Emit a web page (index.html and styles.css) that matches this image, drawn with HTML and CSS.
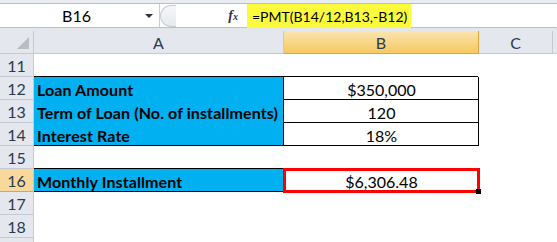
FILE: index.html
```html
<!DOCTYPE html>
<html lang="en">
<head>
    <meta charset="UTF-8">
    <title>PMT - Monthly Installment</title>
    <link rel="stylesheet" href="styles.css">
</head>
<body>
    <!-- Formula bar -->
    <div class="topband"></div>
    <div class="fbar">
        <div class="namebox">
            <span class="name">B16</span>
            <span class="arrow"></span>
        </div>
        <div class="splitter"><span class="knob"></span></div>
        <div class="fx">f<span>x</span></div>
        <div class="formula"><span class="hl">=PMT(B14/12,B13,-B12)</span></div>
    </div>
    <div class="gap"></div>

    <!-- Sheet -->
    <div class="sheet">
        <div class="hd corner"><span class="tri"></span></div>
        <div class="hd col">A</div>
        <div class="hd col active">B</div>
        <div class="hd col">C</div>
        <div class="hd col last"></div>

        <div class="hd row">11</div>
        <div class="c"></div><div class="c"></div><div class="c"></div><div class="c"></div>

        <div class="hd row">12</div>
        <div class="c blue top">Loan Amount</div>
        <div class="c box">$350,000</div>
        <div class="c"></div><div class="c"></div>

        <div class="hd row">13</div>
        <div class="c blue">Term of Loan (No. of installments)</div>
        <div class="c box">120</div>
        <div class="c"></div><div class="c"></div>

        <div class="hd row">14</div>
        <div class="c blue bottom">Interest Rate</div>
        <div class="c box">18%</div>
        <div class="c"></div><div class="c"></div>

        <div class="hd row">15</div>
        <div class="c"></div><div class="c"></div><div class="c"></div><div class="c"></div>

        <div class="hd row active">16</div>
        <div class="c blue top bottom">Monthly Installment</div>
        <div class="c result">$6,306.48<span class="handle"></span></div>
        <div class="c"></div><div class="c"></div>

        <div class="hd row">17</div>
        <div class="c"></div><div class="c"></div><div class="c"></div><div class="c"></div>

        <div class="hd row">18</div>
        <div class="c"></div><div class="c"></div><div class="c"></div><div class="c"></div>

        <div class="hd row"></div>
        <div class="c"></div><div class="c"></div><div class="c"></div><div class="c"></div>
    </div>
</body>
</html>
```

FILE: styles.css
```css
* {
    margin: 0;
    padding: 0;
    box-sizing: border-box;
}

body {
    width: 557px;
    height: 242px;
    overflow: hidden;
    background: #fff;
    font-family: Lato, "Liberation Sans", sans-serif;
    color: #000;
}

/* Formula bar */
.topband {
    height: 4px;
    background: #e9edf2;
    border-bottom: 1px solid #b9c0ca;
}

.fbar {
    height: 24px;
    display: flex;
    align-items: stretch;
    background: #fff;
    border-bottom: 1px solid #b9c0ca;
}

.namebox {
    width: 160px;
    display: flex;
    align-items: center;
    border-right: 1px solid #c9ced6;
}

.name {
    flex: 1;
    text-align: center;
    font-size: 16px;
    padding-left: 14px;
    padding-right: 6px;
}

.arrow {
    width: 0;
    height: 0;
    margin-right: 6px;
    border-left: 4px solid transparent;
    border-right: 4px solid transparent;
    border-top: 4px solid #333;
}

.splitter {
    width: 18px;
    background: #fff;
    display: flex;
    align-items: center;
}

.knob {
    width: 16px;
    height: 22px;
    border-radius: 11px 0 0 11px;
    border: 1px solid #c6ccd4;
    border-right: none;
    background: linear-gradient(#f6f7f9, #e6e9ed);
}

.fx {
    width: 69px;
    text-align: right;
    padding-right: 9px;
    font-family: "Liberation Serif", serif;
    font-style: italic;
    font-weight: bold;
    font-size: 14px;
    line-height: 24px;
    color: #333;
}

.fx span {
    font-size: 10px;
}

.formula {
    flex: 1;
}

.hl {
    display: inline-block;
    height: 24px;
    line-height: 25px;
    padding: 0 4px 0 5px;
    background: #fbfa3c;
    font-size: 14px;
}

.gap {
    height: 3px;
    background: #e3e7ec;
}

/* Grid */
.sheet {
    display: grid;
    grid-template-columns: 34px 250px 195px 74px 1fr;
    grid-template-rows: repeat(10, 23px);
}

.hd {
    background: #e4e8ee;
    border-right: 1px solid #c5cad2;
    border-bottom: 1px solid #c5cad2;
    color: #2b3a4d;
    font-size: 16px;
    display: flex;
    align-items: center;
    justify-content: center;
    padding-top: 1px;
}

.hd.col.active {
    background: linear-gradient(#fbe4b2, #f6c960);
    border-color: #e1a53c;
}

.hd.row.active {
    background: #f9d99b;
    border-bottom-color: #e1a53c;
}

.hd.last {
    border-right: none;
}

.corner {
    position: relative;
}

.tri {
    position: absolute;
    right: 4px;
    bottom: 4px;
    width: 0;
    height: 0;
    border-left: 12px solid transparent;
    border-bottom: 12px solid #b8bdc4;
}

.c {
    font-size: 16px;
    display: flex;
    align-items: center;
    padding-top: 2px;
}

.blue {
    background: #00b0f0;
    font-weight: bold;
    padding-left: 3px;
    letter-spacing: 0.1px;
    box-shadow: inset -1px 0 0 #000;
}

.blue.top {
    box-shadow: inset -1px 0 0 #000, 0 -1px 0 #000;
}

.blue.bottom {
    box-shadow: inset -1px -1px 0 #000;
}

.blue.top.bottom {
    box-shadow: inset -1px -1px 0 #000, 0 -1px 0 #000;
}

.box {
    justify-content: center;
    box-shadow: inset -1px -1px 0 #000, -1px -1px 0 #000;
}

.result {
    justify-content: center;
    position: relative;
    box-shadow: inset 0 0 0 2px #f00, 0 0 0 1px #f00;
}

.handle {
    position: absolute;
    right: -2px;
    bottom: -2px;
    width: 5px;
    height: 5px;
    background: #000;
}
```
